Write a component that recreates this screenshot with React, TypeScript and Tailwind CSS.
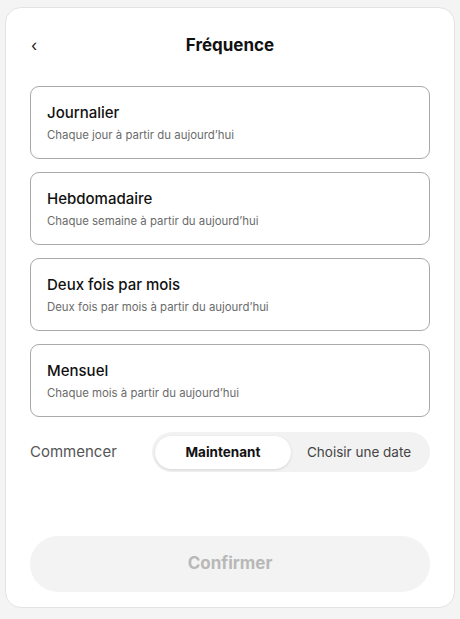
import React from 'react';

const options = [
  { title: 'Journalier', subtitle: 'Chaque jour à partir du aujourd’hui' },
  { title: 'Hebdomadaire', subtitle: 'Chaque semaine à partir du aujourd’hui' },
  { title: 'Deux fois par mois', subtitle: 'Deux fois par mois à partir du aujourd’hui' },
  { title: 'Mensuel', subtitle: 'Chaque mois à partir du aujourd’hui' },
];

const OptionCard: React.FC<{ title: string; subtitle: string }> = ({ title, subtitle }) => (
  <button className="flex h-[73px] w-full flex-col items-start justify-center rounded-[9px] border border-[#a9a9a9] bg-white pl-[16px] text-left">
    <span className="text-[15px] font-medium leading-[18px] text-[#111]">{title}</span>
    <span className="mt-[6px] text-[11.4px] leading-[14px] text-[#6b6b6b]">{subtitle}</span>
  </button>
);

export default function App() {
  return (
    <div
      className="min-h-[619px] w-[460px] bg-[#f4f4f4] px-[5px] pt-[7px]"
      style={{ fontFamily: 'Inter, "Liberation Sans", Arial, sans-serif' }}
    >
      <div className="flex h-[601px] flex-col rounded-[16px] border border-[#e3e3e3] bg-white px-[24px]">
        {/* Header */}
        <div className="relative mt-[26px] flex h-[24px] items-center justify-center">
          <span className="absolute left-[1px] top-[1px] text-[16px] leading-[20px] text-[#222]">‹</span>
          <h1 className="text-[17px] font-bold text-[#111]">Fréquence</h1>
        </div>

        {/* Options */}
        <div className="mt-[28px] flex flex-col gap-[13px]">
          {options.map((o) => (
            <OptionCard key={o.title} title={o.title} subtitle={o.subtitle} />
          ))}
        </div>

        {/* Start */}
        <div className="mt-[15px] flex items-center justify-between">
          <span className="text-[15px] text-[#555]">Commencer</span>
          <div className="flex h-[40px] w-[278px] items-center rounded-full bg-[#f2f2f2] px-[3px]">
            <div className="flex h-[33px] w-[136px] items-center justify-center rounded-full bg-white shadow-[0_1px_3px_rgba(0,0,0,0.12)]">
              <span className="text-[13.5px] font-bold text-[#111]">Maintenant</span>
            </div>
            <div className="flex flex-1 items-center justify-center">
              <span className="text-[13.5px] text-[#444]">Choisir une date</span>
            </div>
          </div>
        </div>

        {/* Confirm */}
        <button className="mt-[64px] flex h-[56px] w-full items-center justify-center rounded-full bg-[#f3f3f3]">
          <span className="text-[17px] font-bold text-[#b8b8b8]">Confirmer</span>
        </button>
      </div>
    </div>
  );
}
